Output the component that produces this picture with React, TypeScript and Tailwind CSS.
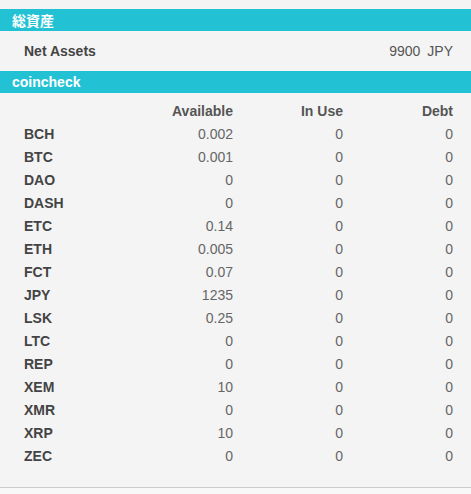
import React from "react";

const rows: [string, string, string, string][] = [
  ["BCH", "0.002", "0", "0"],
  ["BTC", "0.001", "0", "0"],
  ["DAO", "0", "0", "0"],
  ["DASH", "0", "0", "0"],
  ["ETC", "0.14", "0", "0"],
  ["ETH", "0.005", "0", "0"],
  ["FCT", "0.07", "0", "0"],
  ["JPY", "1235", "0", "0"],
  ["LSK", "0.25", "0", "0"],
  ["LTC", "0", "0", "0"],
  ["REP", "0", "0", "0"],
  ["XEM", "10", "0", "0"],
  ["XMR", "0", "0", "0"],
  ["XRP", "10", "0", "0"],
  ["ZEC", "0", "0", "0"],
];

export default function App() {
  return (
    <div
      className="w-[471px] h-[494px] bg-[#f4f4f4] flex flex-col"
      style={{ fontFamily: '"Liberation Sans", Arial, "Noto Sans CJK JP", sans-serif' }}
    >
      <div className="border-b border-[#cccccc] flex flex-col pt-[9px] pb-[19px]">
        <div
          className="h-[22px] bg-[#22c2d4] text-white font-bold text-[14px] leading-[22px] pl-[12px]"
          style={{ fontFamily: '"Noto Sans CJK JP", "Liberation Sans", sans-serif' }}
        >
          総資産
        </div>
        <div className="h-[40px] flex items-center justify-between pl-[24px] pr-[18px] text-[14px]">
          <span className="font-bold text-[#444]">Net Assets</span>
          <span className="text-[#555]">
            9900<span className="ml-[7px]">JPY</span>
          </span>
        </div>
        <div className="h-[22px] bg-[#22c2d4] text-white font-bold text-[14px] leading-[22px] pl-[12px]">
          coincheck
        </div>
        <div className="pt-[7px] pl-[24px] pr-[18px] text-[14px]">
          <div className="grid grid-cols-[99px_110px_110px_110px] h-[23px] items-center font-bold text-[#555]">
            <span></span>
            <span className="text-right">Available</span>
            <span className="text-right">In Use</span>
            <span className="text-right">Debt</span>
          </div>
          {rows.map((r) => (
            <div
              key={r[0]}
              className="grid grid-cols-[99px_110px_110px_110px] h-[23px] items-center"
            >
              <span className="font-bold text-[#444]">{r[0]}</span>
              <span className="text-right text-[#666]">{r[1]}</span>
              <span className="text-right text-[#666]">{r[2]}</span>
              <span className="text-right text-[#666]">{r[3]}</span>
            </div>
          ))}
        </div>
      </div>
      <div className="flex-1 bg-[#f8f8f8]"></div>
    </div>
  );
}
